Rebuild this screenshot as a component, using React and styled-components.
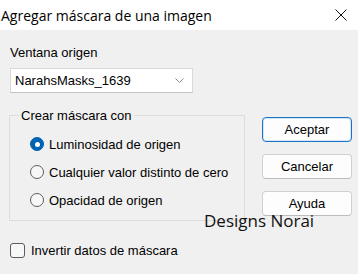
import React from 'react';
import styled, { createGlobalStyle } from 'styled-components';

const GlobalStyle = createGlobalStyle`
  html, body {
    margin: 0;
    padding: 0;
    background: #f0f0f0;
  }
  * {
    box-sizing: border-box;
  }
`;

const Window = styled.div`
  position: relative;
  width: 358px;
  height: 274px;
  background: #f0f0f0;
  font-family: "Liberation Sans", Arial, sans-serif;
  font-size: 13px;
  color: #000;
  overflow: hidden;
`;

const TitleBar = styled.div`
  height: 30px;
  background: #fff;
  display: flex;
  align-items: center;
  justify-content: space-between;
  padding: 0 11px 0 1px;
`;

const Title = styled.span`
  font-family: "Open Sans", "Noto Sans", sans-serif;
  font-size: 14px;
  color: #000;
`;

const CloseButton = styled.span`
  display: flex;
  width: 12px;
  height: 12px;
`;

const Body = styled.div`
  padding: 15px 6px 0 9px;
  display: flex;
  flex-direction: column;
`;

const Label = styled.div`
  line-height: 15px;
  margin-left: 1px;
`;

const Select = styled.div`
  margin: 8px 0 0 1px;
  width: 183px;
  height: 25px;
  background: #fff;
  border: 1px solid #d9d9d9;
  border-bottom-color: #c4c4c4;
  display: flex;
  align-items: center;
  justify-content: space-between;
  padding: 0 8px 0 4px;
`;

const Row = styled.div`
  display: flex;
  margin-top: 15px;
`;

const Group = styled.fieldset`
  margin: 0;
  padding: 0;
  width: 236px;
  height: 113px;
  border: 1px solid #dcdcdc;
`;

const Caption = styled.legend`
  margin-left: 9px;
  padding: 0 2px;
  line-height: 15px;
`;

const RadioList = styled.div`
  padding: 7px 0 6px 20px;
  display: flex;
  flex-direction: column;
`;

const Option = styled.label`
  height: 28px;
  display: flex;
  align-items: center;
  gap: 5px;
  white-space: nowrap;
`;

const RadioDot = styled.span`
  width: 14px;
  height: 14px;
  border-radius: 50%;
  flex: none;
  display: flex;
  align-items: center;
  justify-content: center;
  background: ${p => (p.checked ? '#0063b1' : '#f7f7f7')};
  border: 1px solid ${p => (p.checked ? '#0063b1' : '#5c5c5c')};

  &::after {
    content: '';
    display: ${p => (p.checked ? 'block' : 'none')};
    width: 5px;
    height: 5px;
    border-radius: 50%;
    background: #fff;
  }
`;

const Buttons = styled.div`
  margin-left: 17px;
  padding-top: 9px;
  display: flex;
  flex-direction: column;
  gap: 12px;
`;

const Button = styled.button`
  width: 90px;
  height: 25px;
  padding: 0;
  border-radius: 4px;
  font-family: "Liberation Sans", Arial, sans-serif;
  font-size: 13px;
  color: #000;
  background: #fdfdfd;
  border: 1px solid ${p => (p.primary ? '#1a74c8' : '#d0d0d0')};
  border-bottom-color: ${p => (p.primary ? '#1a74c8' : '#bcbcbc')};
  box-shadow: ${p => (p.primary ? 'inset 0 0 0 1px #d6e6f5' : 'none')};
`;

const CheckRow = styled.label`
  margin: 22px 0 0 1px;
  display: flex;
  align-items: center;
  gap: 6px;
  line-height: 15px;
`;

const CheckBox = styled.span`
  width: 15px;
  height: 15px;
  border: 1px solid #5c5c5c;
  border-radius: 3px;
  background: #f7f7f7;
`;

const Watermark = styled.div`
  position: absolute;
  left: 204px;
  top: 209px;
  font-family: "Open Sans", "Noto Sans", sans-serif;
  font-size: 17px;
  line-height: 23px;
  color: #111;
`;

const options = [
  { text: 'Luminosidad de origen', checked: true },
  { text: 'Cualquier valor distinto de cero', checked: false },
  { text: 'Opacidad de origen', checked: false },
];

const App = () => {
  return (
    <Window>
      <GlobalStyle />
      <TitleBar>
        <Title>Agregar máscara de una imagen</Title>
        <CloseButton>
          <svg width="12" height="12" viewBox="0 0 12 12">
            <path d="M0.5 0.5 L11.5 11.5 M11.5 0.5 L0.5 11.5" stroke="#111" strokeWidth="1" fill="none" />
          </svg>
        </CloseButton>
      </TitleBar>
      <Body>
        <Label>Ventana origen</Label>
        <Select>
          <span>NarahsMasks_1639</span>
          <svg width="9" height="5" viewBox="0 0 9 5">
            <path d="M0.5 0.5 L4.5 4.5 L8.5 0.5" stroke="#8a8a8a" strokeWidth="1" fill="none" />
          </svg>
        </Select>
        <Row>
          <Group>
            <Caption>Crear máscara con</Caption>
            <RadioList>
              {options.map(o => (
                <Option key={o.text}>
                  <RadioDot checked={o.checked} />
                  {o.text}
                </Option>
              ))}
            </RadioList>
          </Group>
          <Buttons>
            <Button primary>Aceptar</Button>
            <Button>Cancelar</Button>
            <Button>Ayuda</Button>
          </Buttons>
        </Row>
        <CheckRow>
          <CheckBox />
          Invertir datos de máscara
        </CheckRow>
      </Body>
      <Watermark>Designs Norai</Watermark>
    </Window>
  );
};

export default App;
